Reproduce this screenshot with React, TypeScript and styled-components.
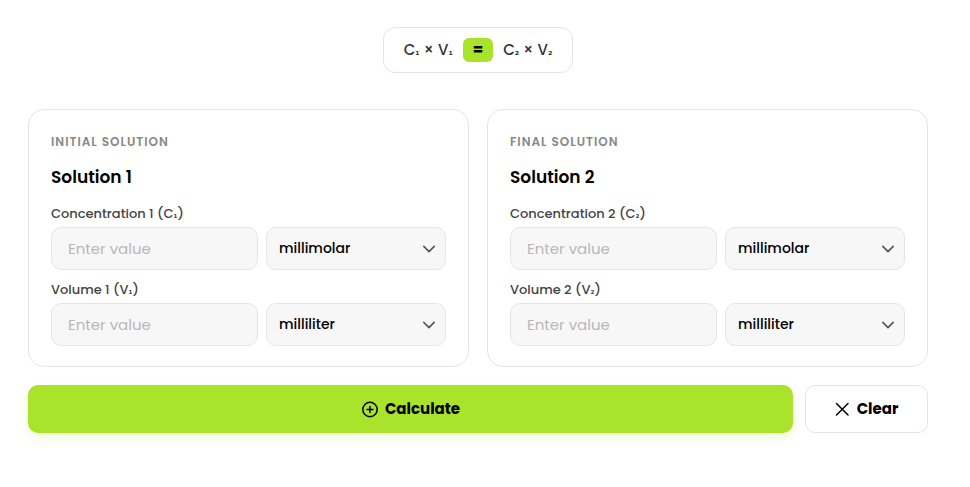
import React, { useId, useState } from "react";
import styled, { createGlobalStyle } from "styled-components";

const GlobalStyle = createGlobalStyle`
  *, *::before, *::after { box-sizing: border-box; }
  body { margin: 0; background: #fff; color: #000; font-family: Poppins, Inter, sans-serif; }
  button, input, select { font-family: inherit; }
`;

const Page = styled.main`
  padding: 27px 42px 54px 28px;
`;

const Calculator = styled.form`
  display: flex;
  flex-direction: column;
  max-width: 900px;
  margin: 0 auto;
`;

const Formula = styled.div`
  display: flex;
  align-items: center;
  align-self: center;
  gap: 10px;
  margin-bottom: 36px;
  padding: 10px 20px;
  border: 1px solid #e5e5e5;
  border-radius: 12px;
  color: #333;
  font-size: 15px;
  font-weight: 500;
  line-height: 24px;
`;

const Term = styled.span`
  white-space: pre;
`;

const Equals = styled.span`
  padding: 0 10px;
  border-radius: 6px;
  background: #aae32b;
  color: #000;
  font-weight: 700;
`;

const FormulaSubscript = styled.span`
  font-family: "DejaVu Sans", sans-serif;
  font-size: 10px;
  font-weight: 700;
  line-height: 1;
`;

const LabelSubscript = styled.span`
  font-family: "DejaVu Sans", sans-serif;
  font-size: 9px;
  font-weight: 700;
  line-height: 1;
`;

const Cards = styled.div`
  display: grid;
  grid-template-columns: repeat(auto-fit, minmax(min(320px, 100%), 1fr));
  gap: 18px;
  margin-bottom: 18px;
`;

const Card = styled.section`
  padding: 24px 22px 20px;
  border: 1px solid #e5e5e5;
  border-radius: 16px;
`;

const Eyebrow = styled.p`
  margin: 0 0 13px;
  color: #888;
  font-size: 12px;
  font-weight: 600;
  line-height: 16px;
  letter-spacing: 1px;
  text-transform: uppercase;
`;

const Title = styled.h2`
  margin: 0 0 13px;
  font-size: 17px;
  font-weight: 600;
  line-height: 28px;
`;

const Field = styled.div`
  & + & { margin-top: 10px; }
`;

const Label = styled.label`
  display: block;
  margin-bottom: 3px;
  color: #444;
  font-size: 13px;
  font-weight: 500;
  line-height: 20px;
`;

const Controls = styled.div`
  display: grid;
  grid-template-columns: minmax(0, 1fr) 180px;
  gap: 8px;
`;

const ValueInput = styled.input`
  width: 100%;
  height: 43px;
  padding: 0 16px;
  border: 1px solid #e5e5e5;
  border-radius: 10px;
  background: #f7f7f7;
  font-size: 15px;
  &::placeholder { color: #b8b8b8; opacity: 1; }
`;

const SelectBox = styled.div`
  display: grid;
  align-items: center;
  & > * { grid-area: 1 / 1; }
`;

const Select = styled.select`
  appearance: none;
  width: 100%;
  height: 43px;
  padding: 0 36px 1px 12px;
  border: 1px solid #e5e5e5;
  border-radius: 10px;
  background: #f7f7f7;
  color: #000;
  font-size: 14px;
  font-weight: 500;
`;

const Chevron = styled.svg`
  justify-self: end;
  margin-right: 10px;
  pointer-events: none;
`;

const Actions = styled.div`
  display: flex;
  gap: 12px;
`;

const Button = styled.button<{ $primary?: boolean }>`
  display: flex;
  flex: ${({ $primary }) => ($primary ? "1" : "0 0 123px")};
  align-items: center;
  justify-content: center;
  gap: 6px;
  height: 48px;
  padding: 0 0 1px;
  border: ${({ $primary }) => ($primary ? "0" : "1px solid #e5e5e5")};
  border-radius: 10px;
  background: ${({ $primary }) => ($primary ? "#aae32b" : "#fff")};
  box-shadow: ${({ $primary }) => ($primary ? "0 4px 12px rgba(170, 227, 43, 0.2)" : "none")};
  color: #000;
  font-size: 15px;
  font-weight: 700;
  cursor: pointer;
`;

const subscripts: Record<number, string> = { 1: "₁", 2: "₂" };

function FormulaTerm({ index }: { index: number }) {
  const sub = <FormulaSubscript>{subscripts[index]}</FormulaSubscript>;
  return <Term>C{sub} × V{sub}</Term>;
}

interface QuantityProps {
  name: string;
  symbol: string;
  index: number;
  units: string[];
}

function Quantity({ name, symbol, index, units }: QuantityProps) {
  const id = useId();
  const [value, setValue] = useState("");
  return (
    <Field>
      <Label htmlFor={id}>
        {name} {index} ({symbol}<LabelSubscript>{subscripts[index]}</LabelSubscript>)
      </Label>
      <Controls>
        <ValueInput id={id} inputMode="decimal" placeholder="Enter value" value={value} onChange={(e) => setValue(e.target.value)} />
        <SelectBox>
          <Select aria-label={`${name} ${index} unit`} defaultValue={units[0]}>
            {units.map((unit) => <option key={unit}>{unit}</option>)}
          </Select>
          <Chevron width="14" height="14" viewBox="0 0 14 14" fill="none" stroke="#555" strokeWidth="1.6" strokeLinecap="round" strokeLinejoin="round" aria-hidden="true">
            <path d="M1.8 4.4 7 9.6 12.2 4.4" />
          </Chevron>
        </SelectBox>
      </Controls>
    </Field>
  );
}

function SolutionCard({ stage, index }: { stage: string; index: number }) {
  return (
    <Card>
      <Eyebrow>{stage} solution</Eyebrow>
      <Title>Solution {index}</Title>
      <Quantity name="Concentration" symbol="C" index={index} units={["millimolar", "molar", "micromolar"]} />
      <Quantity name="Volume" symbol="V" index={index} units={["milliliter", "liter", "microliter"]} />
    </Card>
  );
}

export default function App() {
  const [formKey, setFormKey] = useState(0);
  return (
    <>
      <GlobalStyle />
      <Page>
        <Calculator onSubmit={(e) => e.preventDefault()}>
          <Formula>
            <FormulaTerm index={1} />
            <Equals>=</Equals>
            <FormulaTerm index={2} />
          </Formula>
          <Cards key={formKey}>
            <SolutionCard stage="Initial" index={1} />
            <SolutionCard stage="Final" index={2} />
          </Cards>
          <Actions>
            <Button type="submit" $primary>
              <svg width="18" height="18" viewBox="0 0 18 18" fill="none" stroke="currentColor" strokeWidth="1.5" strokeLinecap="round" aria-hidden="true">
                <circle cx="9" cy="9.5" r="7.2" />
                <path d="M9 6.5v6M6 9.5h6" />
              </svg>
              Calculate
            </Button>
            <Button type="button" onClick={() => setFormKey((key) => key + 1)}>
              <svg width="16" height="16" viewBox="0 0 16 16" fill="none" stroke="currentColor" strokeWidth="1.5" strokeLinecap="round" aria-hidden="true">
                <path d="m1.5 2.5 11.5 11.5M13 2.5 1.5 14" />
              </svg>
              Clear
            </Button>
          </Actions>
        </Calculator>
      </Page>
    </>
  );
}
